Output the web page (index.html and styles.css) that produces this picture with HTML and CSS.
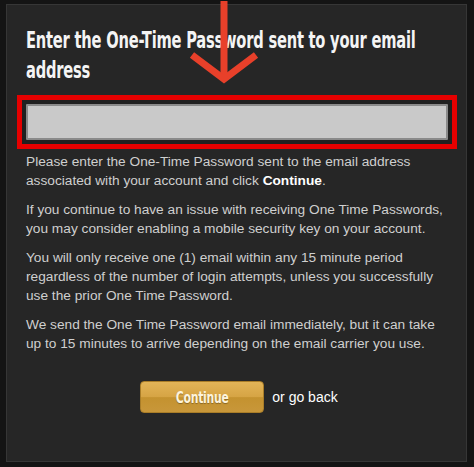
FILE: index.html
```html
<!DOCTYPE html>
<html>
<head>
<meta charset="utf-8">
<link rel="stylesheet" href="styles.css">
</head>
<body>
<div class="panel">
  <h1 class="title">Enter the One-Time Password sent to your email address</h1>
  <div class="otp-frame">
    <input class="otp-input" type="text" aria-label="One-Time Password">
  </div>
  <p class="info first">Please enter the One-Time Password sent to the email address associated with your account and click <b>Continue</b>.</p>
  <p class="info">If you continue to have an issue with receiving One Time Passwords, you may consider enabling a mobile security key on your account.</p>
  <p class="info">You will only receive one (1) email within any 15 minute period regardless of the number of login attempts, unless you successfully use the prior One Time Password.</p>
  <p class="info">We send the One Time Password email immediately, but it can take up to 15 minutes to arrive depending on the email carrier you use.</p>
  <div class="actions">
    <button class="btn-continue"><span class="btn-label">Continue</span></button>
    <span class="go-back">or go back</span>
  </div>
  <svg class="arrow" width="80" height="90" viewBox="0 0 80 90">
    <line x1="40" y1="-4" x2="40" y2="76" stroke="#e8402a" stroke-width="7"/>
    <polyline points="8,54 40,78 72,54" fill="none" stroke="#e8402a" stroke-width="7" stroke-linejoin="miter"/>
  </svg>
</div>
</body>
</html>
```

FILE: styles.css
```css
html, body {
  margin: 0;
  padding: 0;
  background: #141414;
}
body {
  width: 474px;
  height: 467px;
  overflow: hidden;
}
.panel {
  position: relative;
  box-sizing: border-box;
  margin: 4px 7px 0 6px;
  height: 458px;
  background: #262626;
  border: 1px solid #363636;
  padding: 20px 16px 0 19px;
  font-family: "Liberation Sans", Arial, sans-serif;
  color: #cfcfcf;
}
.title {
  width: 560px;
  margin: 0 0 10px 0;
  transform: scaleX(0.725);
  transform-origin: left top;
  font-family: "DejaVu Sans Condensed", "DejaVu Sans", sans-serif;
  font-stretch: condensed;
  font-weight: bold;
  font-size: 22.5px;
  line-height: 30px;
  color: #f4f4f4;
  letter-spacing: -0.3px;
}
.otp-frame {
  margin: 0 -7px 0 -9px;
  border: 5px solid #e60000;
  background: #202020;
  padding: 4px 4px;
}
.otp-input {
  display: block;
  box-sizing: border-box;
  width: 100%;
  height: 36px;
  margin: 0;
  background: #c9c9c9;
  border: 2px solid #8a8a8a;
  border-radius: 1px;
}
.info {
  margin: 1px 0 10px 0;
  font-size: 13.7px;
  line-height: 19px;
}
.info.first {
  margin-top: 3px;
}
.info b {
  color: #fff;
}
.actions {
  display: flex;
  align-items: center;
  justify-content: center;
  gap: 8px;
  margin-top: 28px;
  padding-left: 2px;
}
.btn-continue {
  width: 124px;
  height: 32px;
  padding: 0;
  border: 1px solid #a97d28;
  border-radius: 4px;
  background: linear-gradient(#e2b458 0%, #d6a444 50%, #c4922f 52%, #c8973a 100%);
  color: #fdf3dc;
  text-shadow: 0 1px 1px rgba(0,0,0,0.3);
}
.btn-label {
  display: inline-block;
  transform: scaleX(0.75);
  font-family: "DejaVu Sans Condensed", "DejaVu Sans", sans-serif;
  font-stretch: condensed;
  font-weight: bold;
  font-size: 16px;
  letter-spacing: -0.3px;
}
.go-back {
  color: #ffffff;
  font-size: 14px;
}
.arrow {
  position: absolute;
  left: 177px;
  top: -4px;
}
```
